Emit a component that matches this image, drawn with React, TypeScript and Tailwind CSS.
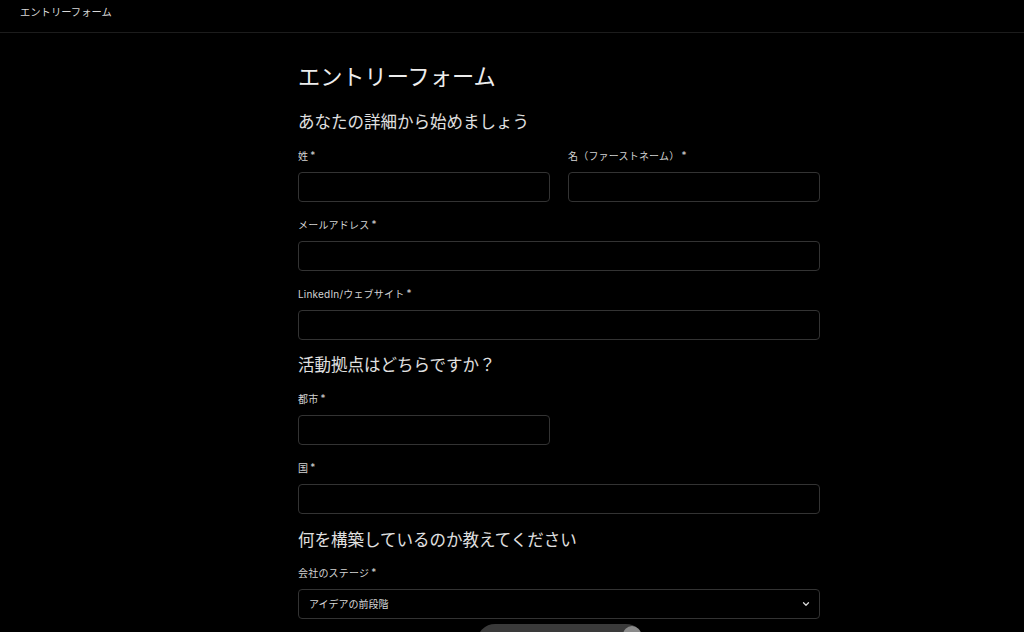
import React from "react";

const font = { fontFamily: '"Inter", "Noto Sans CJK JP", sans-serif' };

function Label({ children }: { children: React.ReactNode }) {
  return (
    <div className="text-[10px] leading-[12px] text-[#d4d4d4] mb-[10px] tracking-[0.2px]">
      {children}
      <span className="ml-[2px] relative -top-[1px]">*</span>
    </div>
  );
}

function Input() {
  return (
    <div className="h-[30px] w-full rounded-[4px] border border-[#333333] bg-black" />
  );
}

function Field({ label }: { label: string }) {
  return (
    <div className="flex flex-col">
      <Label>{label}</Label>
      <Input />
    </div>
  );
}

export default function App() {
  return (
    <div className="w-[1024px] h-[632px] bg-black overflow-hidden relative" style={font}>
      <header className="h-[33px] border-b border-[#1c1c1c] flex items-center pl-[20px]">
        <span className="text-[10.3px] text-[#d8d8d8] leading-none -mt-[8px]">エントリーフォーム</span>
      </header>
      <main className="ml-[298px] w-[522px] flex flex-col">
        <h1 className="mt-[29px] text-[22.2px] leading-[30px] text-[#ededed] font-normal">エントリーフォーム</h1>
        <h2 className="mt-[18px] text-[16.5px] leading-[24px] text-[#e0e0e0] font-normal">あなたの詳細から始めましょう</h2>
        <div className="mt-[16px] grid grid-cols-2 gap-x-[18px]">
          <Field label="姓" />
          <Field label="名（ファーストネーム）" />
        </div>
        <div className="mt-[17px]">
          <Field label="メールアドレス" />
        </div>
        <div className="mt-[17px]">
          <Field label="LinkedIn/ウェブサイト" />
        </div>
        <h2 className="mt-[13px] text-[16.5px] leading-[24px] text-[#e0e0e0] font-normal">活動拠点はどちらですか？</h2>
        <div className="mt-[16px] w-[252px]">
          <Field label="都市" />
        </div>
        <div className="mt-[17px]">
          <Field label="国" />
        </div>
        <h2 className="mt-[14px] text-[16.5px] leading-[24px] text-[#e0e0e0] font-normal">何を構築しているのか教えてください</h2>
        <div className="mt-[15px] flex flex-col">
          <Label>会社のステージ</Label>
          <div className="h-[30px] w-full rounded-[4px] border border-[#333333] bg-black flex items-center justify-between pl-[10px] pr-[8px]">
            <span className="text-[10px] text-[#d8d8d8]">アイデアの前段階</span>
            <svg width="10" height="10" viewBox="0 0 24 24" fill="none" stroke="#d8d8d8" strokeWidth="3" strokeLinecap="round" strokeLinejoin="round">
              <path d="M6 9l6 6 6-6" />
            </svg>
          </div>
        </div>
      </main>
      <div className="absolute left-[477px] top-[624px] w-[167px] h-[36px] rounded-full bg-[#3a3a3a] flex items-start justify-end pr-[3px] pt-[2px]">
        <div className="w-[18px] h-[18px] rounded-full bg-[#8a8a8a]" />
      </div>
    </div>
  );
}
